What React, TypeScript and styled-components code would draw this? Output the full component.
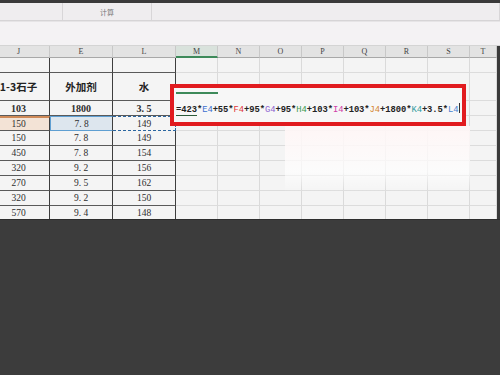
import React from "react";
import styled, { createGlobalStyle } from "styled-components";

const Global = createGlobalStyle`
  html, body { margin: 0; padding: 0; background: #3b3b3b; }
  body { font-family: "Liberation Serif", "Noto Sans CJK SC", serif; }
`;

const Page = styled.div`
  width: 500px;
  height: 375px;
  display: flex;
  flex-direction: column;
  overflow: hidden;
  background: #3c3c3c;
`;

const TopStrip = styled.div`
  height: 3px;
  background: #3a3a3a;
`;

const Ribbon = styled.div`
  height: 17px;
  display: grid;
  grid-template-columns: 63px 89px 1fr;
  background: #efedef;
  border-bottom: 1px solid #d6d4d6;
`;

const RibbonGroup = styled.div`
  border-right: 1px solid #d8d6d8;
  display: flex;
  align-items: center;
  justify-content: center;
  font-family: "Noto Sans CJK SC", sans-serif;
  font-size: 7px;
  color: #777;
`;

const FormulaBand = styled.div`
  height: 23px;
  background: #f4f2f4;
  border-top: 1px solid #e6e4e6;
  border-bottom: 1px solid #d4d4d4;
`;

const SheetWrap = styled.div`
  position: relative;
  height: 173px;
  overflow: hidden;
  background: #f4f4f4;
  border-right: 3px solid #3a3a3a;
`;

const Sheet = styled.div`
  display: grid;
  grid-template-columns: 50px 63px 63px 42px 42px 42px 42px 42px 42px 42px 1fr;
  grid-template-rows: 12px 15px 28px 15px repeat(7, 15px);
`;

type CellProps = {
  $dark?: boolean;
  $darkBottom?: boolean;
  $bg?: string;
  $pad?: boolean;
};

const Cell = styled.div<CellProps>`
  box-sizing: border-box;
  border-right: 1px solid ${(p) => (p.$dark ? "#3e3e3e" : "#dadada")};
  border-bottom: 1px solid ${(p) => (p.$darkBottom ? "#5a5a5a" : "#dcdcdc")};
  background: ${(p) => p.$bg || "transparent"};
  display: flex;
  align-items: center;
  justify-content: center;
  padding-right: ${(p) => (p.$pad ? "12px" : "0")};
  font-size: 9.5px;
  color: #2e2e2e;
  white-space: nowrap;
  overflow: hidden;
`;

const Head = styled(Cell)<{ $active?: boolean }>`
  background: ${(p) => (p.$active ? "#d9e2dc" : "#e3e3e3")};
  border-right: 1px solid #c8c8c8;
  border-bottom: ${(p) => (p.$active ? "2px solid #3d8a5a" : "1px solid #a8a8a8")};
  font-size: 8px;
  color: #444;
`;

const Title = styled(Cell)`
  font-family: "Noto Sans CJK SC", sans-serif;
  font-weight: 700;
  font-size: 10.5px;
  color: #222;
`;

const Strong = styled(Cell)`
  font-weight: 700;
  font-size: 10px;
`;

const Orange = styled(Cell)`
  background: #f3e3d6;
  border-top: 2px solid #cf8a58;
`;

const BlueSel = styled(Cell)`
  background: #dde6ee;
  border: 1px solid #5f9fd2;
  border-right: 1px solid #3e3e3e;
`;

const Dashed = styled(Cell)`
  border-top: 1.5px dashed #2a66a0;
  border-bottom: 1.5px dashed #2a66a0;
  border-right: 1.5px dashed #2a66a0;
`;

const EditBox = styled.div`
  position: absolute;
  left: 170px;
  top: 38px;
  width: 296px;
  height: 42px;
  box-sizing: border-box;
  border: 4px solid #e11b1f;
  background: #f7f7f7;
  display: flex;
  flex-direction: column;
  justify-content: center;
  padding-left: 2px;
`;

const GreenLine = styled.div`
  position: absolute;
  left: 2px;
  top: 4px;
  width: 42px;
  height: 1.5px;
  background: #3d8a5a;
`;

const Formula = styled.div`
  font-family: "Liberation Mono", monospace;
  font-weight: 700;
  font-size: 8.8px;
  letter-spacing: -0.05px;
  color: #222;
  margin-top: 7px;
  white-space: nowrap;
`;

const FirstPart = styled.span`
  border-bottom: 1.5px solid #2c5a3a;
`;

const Ref = styled.span<{ $c: string }>`
  color: ${(p) => p.$c};
  font-weight: 400;
`;

const Caret = styled.span`
  display: inline-block;
  width: 1px;
  height: 10px;
  background: #333;
  vertical-align: -1px;
`;

const Glow = styled.div`
  position: absolute;
  left: 285px;
  top: 80px;
  width: 185px;
  height: 66px;
  background: linear-gradient(180deg, rgba(255, 246, 246, 0.95) 0%, rgba(255, 255, 255, 0.7) 70%, rgba(255, 255, 255, 0) 100%);
`;

const Bottom = styled.div`
  flex: 1;
  background: #3c3c3c;
  border-top: 1px solid #2e2e2e;
`;

const letters = ["J", "E", "L", "M", "N", "O", "P", "Q", "R", "S", "T"];
const data: [string, string, string][] = [
  ["150", "7. 8", "149"],
  ["150", "7. 8", "149"],
  ["450", "7. 8", "154"],
  ["320", "9. 2", "156"],
  ["270", "9. 5", "162"],
  ["320", "9. 2", "150"],
  ["570", "9. 4", "148"],
];

const Empty = ({ n }: { n: number }) => (
  <>
    {Array.from({ length: n }).map((_, i) => (
      <Cell key={i} />
    ))}
  </>
);

export default function App() {
  return (
    <Page>
      <Global />
      <TopStrip />
      <Ribbon>
        <RibbonGroup />
        <RibbonGroup>计算</RibbonGroup>
        <RibbonGroup />
      </Ribbon>
      <FormulaBand />
      <SheetWrap>
        <Sheet>
          {letters.map((l, i) => (
            <Head key={l} $active={i === 3} $pad={i === 0}>
              {l}
            </Head>
          ))}
          <Cell $dark $darkBottom />
          <Cell $dark $darkBottom />
          <Cell $dark $darkBottom />
          <Empty n={8} />
          <Title $dark $darkBottom $pad>
            1-3石子
          </Title>
          <Title $dark $darkBottom>
            外加剂
          </Title>
          <Title $dark $darkBottom>
            水
          </Title>
          <Empty n={8} />
          <Strong $dark $darkBottom $pad>
            103
          </Strong>
          <Strong $dark $darkBottom>
            1800
          </Strong>
          <Strong $dark $darkBottom>
            3. 5
          </Strong>
          <Empty n={8} />
          {data.map((r, i) => (
            <React.Fragment key={i}>
              {i === 0 ? (
                <>
                  <Orange $dark $darkBottom $pad>
                    {r[0]}
                  </Orange>
                  <BlueSel $dark $darkBottom>
                    {r[1]}
                  </BlueSel>
                  <Dashed $dark>{r[2]}</Dashed>
                </>
              ) : (
                <>
                  <Cell $dark $darkBottom $pad>
                    {r[0]}
                  </Cell>
                  <Cell $dark $darkBottom>
                    {r[1]}
                  </Cell>
                  <Cell $dark $darkBottom>
                    {r[2]}
                  </Cell>
                </>
              )}
              <Empty n={8} />
            </React.Fragment>
          ))}
        </Sheet>
        <Glow />
        <EditBox>
          <GreenLine />
          <Formula>
            <FirstPart>=423</FirstPart>*<Ref $c="#3a6fd0">E4</Ref>+55*<Ref $c="#e0383a">F4</Ref>+95*
            <Ref $c="#8c62d0">G4</Ref>+95*<Ref $c="#3a9a52">H4</Ref>+103*<Ref $c="#d040a8">I4</Ref>+103*
            <Ref $c="#d4842e">J4</Ref>+1800*<Ref $c="#2f9aa0">K4</Ref>+3.5*<Ref $c="#4a82d0">L4</Ref>
            <Caret />
          </Formula>
        </EditBox>
      </SheetWrap>
      <Bottom />
    </Page>
  );
}
